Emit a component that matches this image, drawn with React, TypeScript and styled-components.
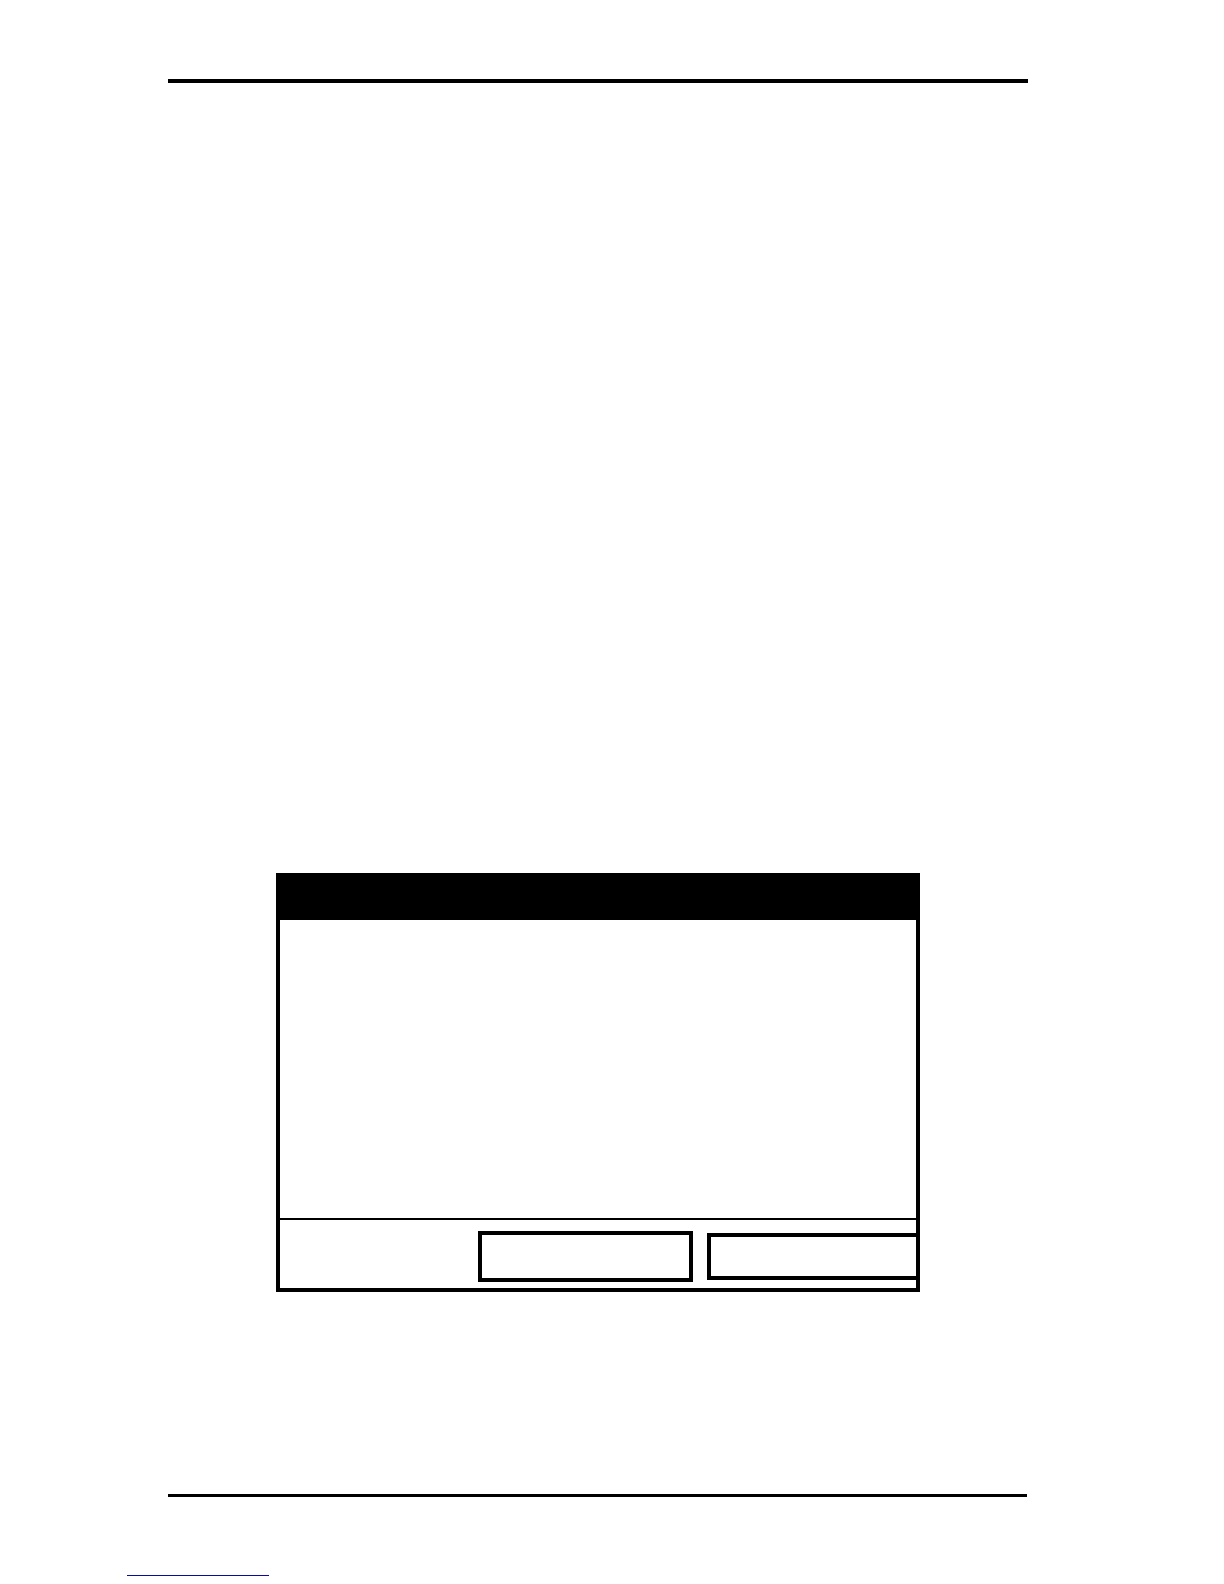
import React from "react";
import styled, { createGlobalStyle } from "styled-components";

const GlobalStyle = createGlobalStyle`
  *, *::before, *::after {
    box-sizing: border-box;
  }

  body {
    margin: 0;
    background: #ffffff;
    color: #000000;
    font-family: "Liberation Sans", Arial, sans-serif;
  }
`;

const Page = styled.div`
  display: flex;
  flex-direction: column;
  min-height: 100vh;
  padding-top: 79px;
`;

const Sheet = styled.main`
  display: flex;
  flex-direction: column;
  margin: 0 196px 0 168px;
`;

const Rule = styled.hr<{ $weight: number; $inset?: number }>`
  width: auto;
  height: ${({ $weight }) => $weight}px;
  margin: 0 ${({ $inset = 0 }) => $inset}px 0 0;
  border: 0;
  background: #000000;
`;

const Screen = styled.section`
  display: flex;
  flex-direction: column;
  margin: 790px 108px 202px;
  border: 4px solid #000000;
`;

const TitleBar = styled.header`
  height: 43px;
  background: #000000;
`;

const Content = styled.div`
  height: 298px;
`;

const Actions = styled.footer`
  display: grid;
  grid-template-columns: 215fr 209fr;
  align-items: center;
  column-gap: 14px;
  height: 70px;
  padding: 5px 0 0 198px;
  border-top: 2px solid #000000;
`;

const ActionButton = styled.button<{ $docked?: boolean }>`
  width: 100%;
  height: ${({ $docked }) => ($docked ? 47 : 51)}px;
  padding: 0;
  border: 4px solid #000000;
  border-right-width: ${({ $docked }) => ($docked ? 0 : 4)}px;
  border-radius: 0;
  background: #ffffff;
`;

const PageFooter = styled.footer`
  display: flex;
  padding: 56px 0 8px 127px;
`;

const FooterLink = styled.a`
  width: 142px;
  height: 23px;
  border-bottom: 1px solid #0a0aa0;
`;

export default function App() {
  return (
    <>
      <GlobalStyle />
      <Page>
        <Sheet>
          <Rule $weight={4} />
          <Screen aria-label="Display">
            <TitleBar />
            <Content />
            <Actions>
              <ActionButton type="button" aria-label="Left action" />
              <ActionButton type="button" aria-label="Right action" $docked />
            </Actions>
          </Screen>
          <Rule $weight={3} $inset={1} />
        </Sheet>
        <PageFooter>
          <FooterLink href="#" aria-label="Footer link" />
        </PageFooter>
      </Page>
    </>
  );
}
